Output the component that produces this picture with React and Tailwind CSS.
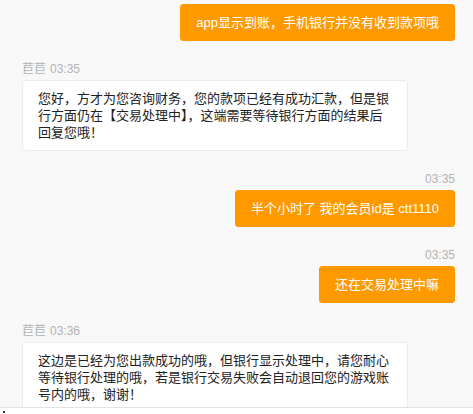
const MESSAGES = [
  { id: 1, mine: true, text: "app显示到账，手机银行并没有收到款项哦" },
  {
    id: 2,
    mine: false,
    name: "苣苣",
    time: "03:35",
    text: "您好，方才为您咨询财务，您的款项已经有成功汇款，但是银行方面仍在【交易处理中】，这端需要等待银行方面的结果后回复您哦！",
  },
  { id: 3, mine: true, time: "03:35", text: "半个小时了 我的会员id是 ctt1110" },
  { id: 4, mine: true, time: "03:35", text: "还在交易处理中嘛" },
  {
    id: 5,
    mine: false,
    name: "苣苣",
    time: "03:36",
    text: "这边是已经为您出款成功的哦，但银行显示处理中，请您耐心等待银行处理的哦，若是银行交易失败会自动退回您的游戏账号内的哦，谢谢！",
  },
];

function Message({ msg }) {
  return (
    <div className={`flex flex-col ${msg.mine ? "items-end" : "items-start"}`}>
      {msg.time && (
        <div className="h-[16px] leading-[16px] text-[12px] text-[#b3b3b3] mb-[3px] whitespace-nowrap">
          {msg.name && <span className="mr-[4px]">{msg.name}</span>}
          {msg.time}
        </div>
      )}
      <div
        className={`rounded-[3px] border px-[15px] py-[9px] text-[13px] leading-[17px] ${
          msg.mine
            ? "bg-[#ff9900] border-[#ff9900] text-white whitespace-nowrap"
            : "bg-white border-[#ececec] text-[#222] max-w-[386px]"
        }`}
      >
        {msg.text}
      </div>
    </div>
  );
}

export default function App() {
  return (
    <div className="h-[414px] w-full flex flex-col overflow-hidden bg-[#f8f8f8] font-['Liberation_Sans','Noto_Sans_CJK_SC',sans-serif]">
      <div className="flex-1 overflow-hidden pt-[4px] pl-[22px] pr-[18px] flex flex-col gap-[20px]">
        {MESSAGES.map(m => (
          <Message key={m.id} msg={m} />
        ))}
      </div>
      <div className="relative h-[7px] shrink-0 bg-white border-t border-[#e3e3e3]">
        <div className="absolute left-[3px] top-[3px] w-[2px] h-[2px] bg-[#333]" />
      </div>
    </div>
  );
}
